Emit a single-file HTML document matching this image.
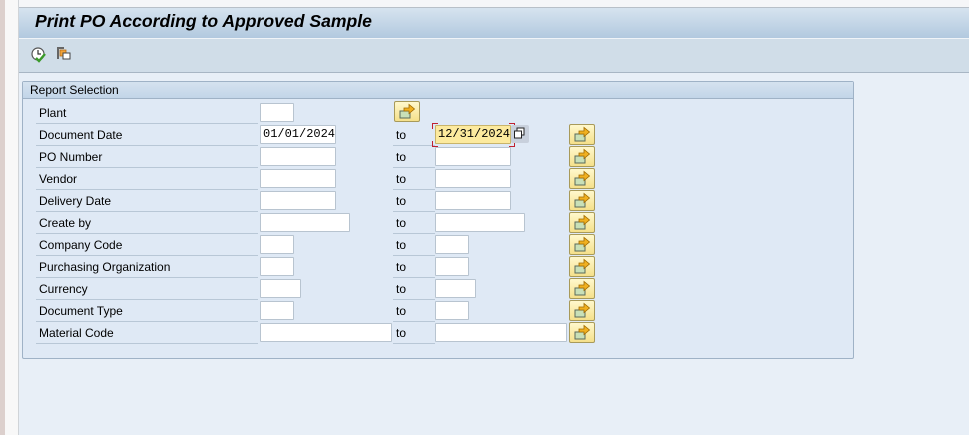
<!DOCTYPE html>
<html><head><meta charset="utf-8"><style>
*{margin:0;padding:0;box-sizing:border-box}
body{width:969px;height:435px;background:#e8eff7;position:relative;overflow:hidden;font-family:"Liberation Sans",Arial,sans-serif;font-size:12px;color:#000}
.a{position:absolute}
.inp{position:absolute;height:19px;background:#fff;border:1px solid #b8c4d0;border-radius:1px;font-family:"Liberation Mono","DejaVu Sans Mono",monospace;font-size:12px;line-height:17px;padding-left:2px}
.lbl{position:absolute;left:36px;width:222px;height:22px;border-bottom:1px solid #b8c7d6;padding-left:3px;line-height:23px}
.to{position:absolute;left:393px;width:42px;height:22px;border-bottom:1px solid #b8c7d6;padding-left:3px;line-height:23px}
.btn{position:absolute;width:26px;height:21px;border:1px solid #a89a5a;border-radius:2px;background:linear-gradient(#fff8cc,#f5e08a)}
</style></head><body>
<div class="a" style="left:0;top:0;width:5px;height:435px;background:#dcd0cd"></div>
<div class="a" style="left:5px;top:0;width:13px;height:435px;background:#f8f8f8"></div>
<div class="a" style="left:18px;top:0;width:1px;height:435px;background:#d0d4d8"></div>
<div class="a" style="left:19px;top:0;width:950px;height:8px;background:#f5f6f8;border-bottom:1px solid #b8c0c8"></div>
<div class="a" style="left:19px;top:8px;width:950px;height:31px;background:linear-gradient(#d6e3ef,#b2c9df);border-bottom:1px solid #f0f4f8"></div>
<div class="a" style="left:35px;top:11px;font-family:'Liberation Sans',Arial,sans-serif;font-weight:bold;font-style:italic;font-size:17.6px;color:#000">Print PO According to Approved Sample</div>
<div class="a" style="left:19px;top:39px;width:950px;height:34px;background:#d0dde8;border-bottom:1px solid #a8b6c4"></div>
<svg class="a" style="left:30px;top:46px" width="18" height="18" viewBox="0 0 18 18"><circle cx="8" cy="8" r="6" fill="#fff" stroke="#555" stroke-width="1.2"/><path d="M8 4v4h3" stroke="#333" fill="none" stroke-width="1.2"/><path d="M6 12l3 3 6-7" stroke="#3a9a2a" fill="none" stroke-width="2.4"/></svg>
<svg class="a" style="left:54px;top:45px" width="18" height="18" viewBox="0 0 18 18"><path d="M3 2h7v2H5v10H3z" fill="#666"/><rect x="6" y="5" width="6" height="6" fill="#f2a33a" stroke="#b86a10" stroke-width=".8"/><rect x="9" y="8" width="7" height="6" fill="#fff" stroke="#444" stroke-width="1"/></svg>
<div class="a" style="left:22px;top:81px;width:832px;height:278px;background:#dfe9f5;border:1px solid #9fb2c6;border-radius:2px"></div>
<div class="a" style="left:23px;top:82px;width:830px;height:17px;background:linear-gradient(#d5e2ef,#c2d5e8);border-bottom:1px solid #9fb2c6;padding-left:7px;line-height:16px">Report Selection</div>

<div class="lbl" style="top:102px">Plant</div>
<div class="inp" style="left:260px;top:103px;width:34px"></div>
<div class="btn" style="left:394px;top:101px"></div>

<div class="lbl" style="top:124px">Document Date</div>
<div class="inp" style="left:260px;top:125px;width:76px">01/01/2024</div>
<div class="to" style="top:124px">to</div>
<div class="a" style="left:432px;top:123px;width:83px;height:24px;border:1px solid #c02030"></div>
<div class="a" style="left:438px;top:122px;width:71px;height:26px;background:#dfe9f5"></div>
<div class="a" style="left:431px;top:129px;width:85px;height:12px;background:#dfe9f5"></div>
<div class="inp" style="left:435px;top:125px;width:76px;background:#fcea9e;border-color:#c8b46a">12/31/2024</div>
<div class="a" style="left:511px;top:125px;width:18px;height:18px;background:#c8d0dc;border-radius:2px"></div>
<svg class="a" style="left:513px;top:127px" width="13" height="13" viewBox="0 0 13 13"><rect x="4" y="1" width="7" height="7" fill="#fff" stroke="#222"/><rect x="1.5" y="4" width="7" height="7" fill="#fff" stroke="#222"/></svg>

<div id="rows"></div>
<script>
var rows=[["PO Number",76,76],["Vendor",76,76],["Delivery Date",76,76],["Create by",90,90],["Company Code",34,34],["Purchasing Organization",34,34],["Currency",41,41],["Document Type",34,34],["Material Code",132,132]];
var h='';
rows.forEach(function(r,i){var c=157+22*i;
h+='<div class="lbl" style="top:'+(c-11)+'px">'+r[0]+'</div><div class="inp" style="left:260px;top:'+(c-10)+'px;width:'+r[1]+'px"></div><div class="to" style="top:'+(c-11)+'px">to</div><div class="inp" style="left:435px;top:'+(c-10)+'px;width:'+r[2]+'px"></div>';});
var b='';for(var i=0;i<10;i++){b+='<div class="btn" style="left:569px;top:'+(124+22*i)+'px"></div>';}
document.getElementById('rows').innerHTML=h+b;
var ico='<svg width="24" height="19" viewBox="0 0 24 19"><rect x="5" y="9" width="10" height="7" fill="#c8e0b8" stroke="#5a6a5a"/><path d="M9 6h5V2.5l5.5 4.5-5.5 4.5V9H9z" fill="#f0b020" stroke="#a06a00" stroke-width=".8"/></svg>';
document.querySelectorAll('.btn').forEach(function(e){e.innerHTML=ico;});
</script>
</body></html>
